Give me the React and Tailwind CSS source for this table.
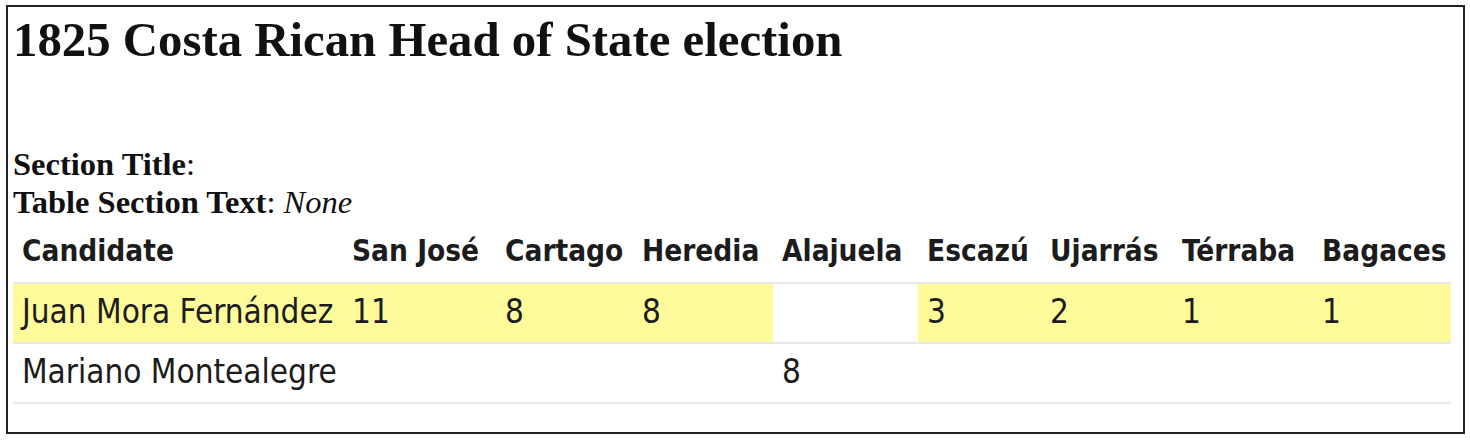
const columns = ["San José", "Cartago", "Heredia", "Alajuela", "Escazú", "Ujarrás", "Térraba", "Bagaces"];

const rows = [
  {
    name: "Juan Mora Fernández",
    winner: true,
    votes: ["11", "8", "8", "", "3", "2", "1", "1"],
  },
  {
    name: "Mariano Montealegre",
    winner: false,
    votes: ["", "", "", "8", "", "", "", ""],
  },
];

export default function App() {
  return (
    <div className="w-[1470px] h-[440px] bg-white pt-[5px] pl-[6px]">
      <div className="w-[1459px] h-[429px] border-2 border-[#222] px-[5px] font-['Liberation_Serif',serif] text-[#111]">
        <h1 className="mt-px text-[48.8px] leading-[64px] font-bold">1825 Costa Rican Head of State election</h1>
        <div className="mt-[73px] text-[32.5px] leading-[38px]">
          <p>
            <b>Section Title</b>:
          </p>
          <p>
            <b>Table Section Text</b>: <i>None</i>
          </p>
        </div>
        <table className="w-[1438px] table-fixed border-collapse font-['DejaVu_Sans_Condensed','DejaVu_Sans',sans-serif] [font-stretch:condensed] text-[#1c1c1c]">
          <colgroup>
            <col className="w-[330px]" />
            <col className="w-[153px]" />
            <col className="w-[137px]" />
            <col className="w-[140px]" />
            <col className="w-[145px]" />
            <col className="w-[123px]" />
            <col className="w-[132px]" />
            <col className="w-[140px]" />
            <col className="w-[138px]" />
          </colgroup>
          <thead>
            <tr className="h-[62px] text-[29.5px]">
              <th className="px-[9px] text-left font-bold whitespace-nowrap">Candidate</th>
              {columns.map((c) => (
                <th key={c} className="px-[9px] text-left font-bold whitespace-nowrap">
                  {c}
                </th>
              ))}
            </tr>
          </thead>
          <tbody className="text-[33px]">
            {rows.map((r) => (
              <tr key={r.name} className="h-[60px] border-y-2 border-[#e8e8e8]">
                <td className={`px-[9px] pb-[3px] whitespace-nowrap ${r.winner ? "bg-[#fffb9b]" : ""}`}>{r.name}</td>
                {r.votes.map((v, i) => (
                  <td key={i} className={`px-[9px] pb-[3px] ${r.winner && v ? "bg-[#fffb9b]" : ""}`}>
                    {v}
                  </td>
                ))}
              </tr>
            ))}
          </tbody>
        </table>
      </div>
    </div>
  );
}
